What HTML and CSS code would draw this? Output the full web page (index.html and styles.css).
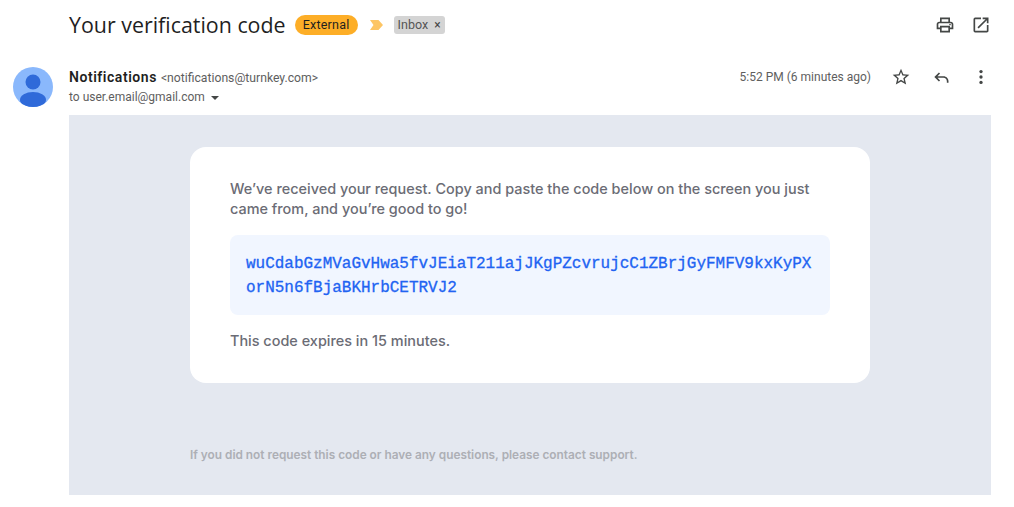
FILE: index.html
```html
<!DOCTYPE html>
<html lang="en">
<head>
<meta charset="utf-8">
<title>Your verification code</title>
<link rel="stylesheet" href="styles.css">
</head>
<body>
<header class="subject-row">
  <div class="subject">
    <h1 class="title">Your verification code</h1>
    <span class="badge">External</span>
    <svg class="marker" width="14" height="10" viewBox="0 0 14 10"><path d="M0 0h8.500l4.500 5-4.500 5H0l3.500-5z" fill="#fdc564"/></svg>
    <span class="label">Inbox <span class="label-x">×</span></span>
  </div>
  <div class="subject-actions">
    <svg class="icon" width="20" height="20" viewBox="0 0 24 24"><path d="M19 8h-1V3H6v5H5c-1.660 0-3 1.340-3 3v6h4v4h12v-4h4v-6c0-1.660-1.340-3-3-3zM8 5h8v3H8V5zm8 14H8v-4h8v4zm2-4v-2H6v2H4v-4c0-.55.45-1 1-1h14c.55 0 1 .45 1 1v4h-2z"/><circle cx="18" cy="11.500" r="1"/></svg>
    <svg class="icon" width="20" height="20" viewBox="0 0 24 24"><path d="M19 19H5V5h7V3H5a2 2 0 0 0-2 2v14a2 2 0 0 0 2 2h14c1.100 0 2-.9 2-2v-7h-2v7zM14 3v2h3.590l-9.830 9.830 1.410 1.410L19 6.410V10h2V3h-7z"/></svg>
  </div>
</header>
<section class="sender-row">
  <svg class="avatar" width="40" height="40" viewBox="0 0 40 40"><defs><clipPath id="av"><circle cx="20" cy="20" r="20"/></clipPath></defs><circle cx="20" cy="20" r="20" fill="#8ab8fc"/><g clip-path="url(#av)" fill="#2f6ad9"><circle cx="20" cy="15" r="7.500"/><ellipse cx="20" cy="33" rx="13" ry="8"/></g></svg>
  <div class="sender-info">
    <div class="sender-line"><strong class="sender-name">Notifications</strong> <span class="sender-mail">&lt;notifications@turnkey.com&gt;</span></div>
    <div class="to-line">to user.email@gmail.com <span class="caret"></span></div>
  </div>
  <div class="sender-actions">
    <span class="time">5:52 PM (6 minutes ago)</span>
    <svg class="icon star" width="20" height="20" viewBox="0 0 24 24"><path d="M22 9.240l-7.190-.62L12 2 9.190 8.630 2 9.240l5.460 4.730L5.820 21 12 17.270 18.180 21l-1.630-7.030L22 9.240zM12 15.400l-3.760 2.270 1-4.280-3.320-2.880 4.380-.38L12 6.100l1.710 4.040 4.380.38-3.320 2.880 1 4.280L12 15.400z"/></svg>
    <svg class="icon reply" width="20" height="20" viewBox="0 0 24 24"><path d="M9.500 6.500L4 12l5.500 5.500 1.400-1.400L7.800 13H15c2.200 0 4 1.800 4 4v2h2v-2c0-3.300-2.700-6-6-6H7.800l3.100-3.100z"/></svg>
    <svg class="icon more" width="20" height="20" viewBox="0 0 24 24"><circle cx="12" cy="5.500" r="2"/><circle cx="12" cy="12" r="2"/><circle cx="12" cy="18.500" r="2"/></svg>
  </div>
</section>
<main class="mail">
  <article class="card">
    <p class="copy">We’ve received your request. Copy and paste the code below on the screen you just came from, and you’re good to go!</p>
    <div class="code">wuCdabGzMVaGvHwa5fvJEiaT211ajJKgPZcvrujcC1ZBrjGyFMFV9kxKyPX orN5n6fBjaBKHrbCETRVJ2</div>
    <p class="copy">This code expires in 15 minutes.</p>
  </article>
  <p class="footnote">If you did not request this code or have any questions, please contact support.</p>
</main>
</body>
</html>
```
FILE: styles.css
```css
* { box-sizing: border-box; }
html, body { margin: 0; padding: 0; background: #fff; }
body { width: 1014px; height: 507px; overflow: hidden; font-family: Roboto, "Liberation Sans", sans-serif; color: #202124; }
.subject-row { display: flex; align-items: center; justify-content: space-between; height: 50px; padding: 0 23px 0 69px; }
.subject { display: flex; align-items: center; }
.title { margin: 0 0 1px; font-family: "Open Sans", sans-serif; font-size: 21.400px; line-height: 28px; font-weight: 400; color: #1f1f1f; letter-spacing: 0; }
.badge { margin-left: 9px; height: 20px; width: 63px; border-radius: 10px; background: #fdae27; font-size: 12.500px; line-height: 20px; text-align: center; color: #1f1f1f; letter-spacing: .2px; }
.marker { margin-left: 12px; }
.label { margin-left: 10px; height: 18px; padding: 0 4px; border-radius: 3px; background: #d4d4d4; font-size: 12.500px; line-height: 18px; color: #555; }
.label-x { font-size: 12px; margin-left: 3px; color: #444; }
.subject-actions { display: flex; gap: 16px; }
.icon { display: block; fill: #444746; }
.sender-row { display: flex; height: 65px; padding-left: 13px; padding-right: 23px; }
.avatar { margin-top: 17px; flex: none; }
.sender-info { margin-left: 16px; padding-top: 18px; }
.sender-line { font-size: 12px; line-height: 18px; color: #5e5e5e; }
.sender-name { font-size: 14px; font-weight: 600; letter-spacing: .54px; color: #1f1f1f; }
.sender-mail { font-size: 12.200px; margin-left: 1px; }
.to-line { font-size: 12px; line-height: 20px; color: #5e5e5e; display: flex; align-items: center; }
.caret { margin-left: 6px; margin-top: 1px; width: 0; height: 0; border: 4px solid transparent; border-top: 4px solid #444746; border-bottom: 0; }
.sender-actions { margin-left: auto; display: flex; align-items: center; height: 24px; margin-top: 15px; }
.time { font-size: 12px; color: #5e5e5e; margin-right: 20px; }
.reply { margin-left: 20px; }
.more { margin-left: 20px; }
.mail { margin-left: 69px; width: 922px; height: 380px; background: #e4e8f0; padding: 32px 121px 0; }
.card { height: 236px; padding: 32px 40px; border-radius: 16px; background: #fff; }
.copy { margin: 0; font-family: Inter, sans-serif; font-size: 14.450px; line-height: 20px; font-weight: 500; color: #6b6c75; }
.code { margin: 16px 0; height: 80px; padding: 17px 16px 0; border-radius: 8px; background: #f1f6ff; font-family: "Liberation Mono", monospace; font-size: 15.970px; line-height: 24px; font-weight: 400; -webkit-text-stroke: .3px #2163f2; color: #2163f2; }
.footnote { margin: 64px 0 0; font-family: Inter, sans-serif; font-size: 11.830px; line-height: 16px; font-weight: 600; color: #adafb5; }
```
